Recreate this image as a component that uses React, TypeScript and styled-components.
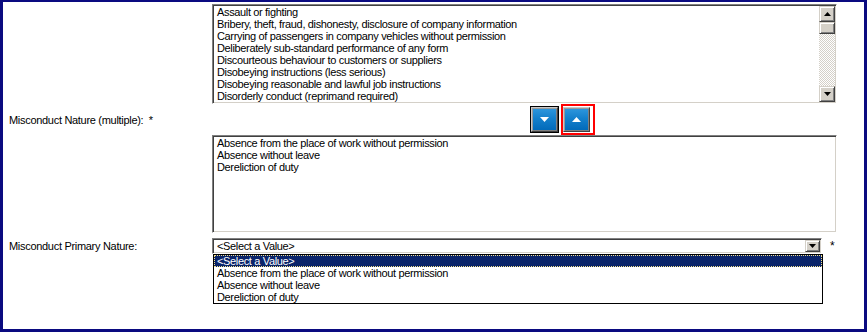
import React from "react";
import styled, { createGlobalStyle } from "styled-components";

const GlobalStyle = createGlobalStyle`
  html, body {
    margin: 0;
    padding: 0;
    background: #ffffff;
  }
  body {
    font-family: "Liberation Sans", Arial, sans-serif;
    font-size: 11px;
    color: #000000;
  }
`;

const Frame = styled.div`
  width: 867px;
  height: 332px;
  box-sizing: border-box;
  border-style: solid;
  border-color: #0a0a80;
  border-width: 2px 3px 3px 3px;
  padding-top: 2px;
  background: #ffffff;
  display: grid;
  grid-template-columns: 209px 1fr;
  grid-auto-rows: min-content;
  overflow: hidden;
`;

const Label = styled.div<{ $gap?: number }>`
  padding-left: 6px;
  margin-top: ${(p) => p.$gap ?? 0}px;
  display: flex;
  align-items: center;
  letter-spacing: -0.3px;
  white-space: pre;
`;

const Cell = styled.div<{ $gap?: number }>`
  display: flex;
  align-items: center;
  margin-top: ${(p) => p.$gap ?? 0}px;
`;

const ListBox = styled.div<{ $height: number }>`
  position: relative;
  width: 625px;
  height: ${(p) => p.$height}px;
  box-sizing: border-box;
  border: 1px solid;
  border-color: #808080 #ffffff #ffffff #808080;
  box-shadow: inset 1px 1px 0 #404040, inset -1px -1px 0 #d4d0c8;
  padding: 1px;
  display: flex;
  overflow: hidden;
`;

const Items = styled.ul`
  flex: 1;
  list-style: none;
  margin: 0;
  padding: 0;
`;

const Item = styled.li<{ $selected?: boolean }>`
  height: 12px;
  line-height: 12px;
  padding-left: 3px;
  letter-spacing: -0.35px;
  white-space: nowrap;
  background: ${(p) => (p.$selected ? "#0a246a" : "transparent")};
  color: ${(p) => (p.$selected ? "#ffffff" : "#000000")};
  outline: ${(p) => (p.$selected ? "1px dotted #f2e08a" : "none")};
  outline-offset: -1px;
`;

const ScrollBar = styled.div`
  width: 16px;
  display: flex;
  flex-direction: column;
  background-color: #f4f3ef;
  background-image: repeating-conic-gradient(#d4d0c8 0 25%, #ffffff 0 50%);
  background-size: 2px 2px;
`;

const ScrollButton = styled.div<{ $height?: number }>`
  width: 16px;
  height: ${(p) => p.$height ?? 16}px;
  box-sizing: border-box;
  background: #d4d0c8;
  border: 1px solid;
  border-color: #d4d0c8 #404040 #404040 #d4d0c8;
  box-shadow: inset 1px 1px 0 #ffffff, inset -1px -1px 0 #808080;
  display: flex;
  align-items: center;
  justify-content: center;
`;

const Track = styled.div`
  flex: 1;
`;

const MoveBar = styled.div`
  height: 31px;
  display: flex;
  align-items: center;
  gap: 2px;
  padding-left: 318px;
`;

const FocusRing = styled.div`
  border: 1px solid #000000;
  display: flex;
`;

const Highlight = styled.div`
  border: 2px solid #ff0000;
  padding: 1px 3px 1px 0;
  display: flex;
`;

const MoveButton = styled.button`
  width: 27px;
  height: 25px;
  padding: 0;
  margin: 0;
  box-sizing: border-box;
  border: 1px solid;
  border-color: #c8c8c8 #404040 #404040 #c8c8c8;
  box-shadow: inset 1px 1px 0 #9a9a9a, inset -1px -1px 0 #808080;
  background: linear-gradient(#2f98de 0%, #1480cc 45%, #0068b8 100%);
  display: flex;
  align-items: center;
  justify-content: center;
  cursor: pointer;
`;

const SelectRow = styled.div`
  display: flex;
  align-items: center;
  gap: 8px;
`;

const Select = styled.div`
  position: relative;
  width: 610px;
  height: 16px;
  box-sizing: border-box;
  border: 1px solid;
  border-color: #808080 #ffffff #ffffff #808080;
  box-shadow: inset 1px 1px 0 #404040, inset -1px -1px 0 #d4d0c8;
  padding: 1px;
  display: flex;
  align-items: stretch;
`;

const SelectValue = styled.div`
  flex: 1;
  padding-left: 3px;
  line-height: 12px;
  letter-spacing: -0.35px;
`;

const DropButton = styled(ScrollButton)`
  width: 15px;
  height: 12px;
`;

const DropList = styled.ul`
  position: absolute;
  top: 15px;
  left: 0;
  width: 610px;
  height: 50px;
  margin: 0;
  padding: 0;
  list-style: none;
  box-sizing: border-box;
  border: 1px solid #000000;
  background: #ffffff;
`;

const Asterisk = styled.span`
  font-size: 12px;
`;

const Arrow = ({ up, color, w, h }: { up?: boolean; color: string; w: number; h: number }) => (
  <svg width={w} height={h} viewBox={`0 0 ${w} ${h}`}>
    <polygon
      points={up ? `0,${h} ${w / 2},0 ${w},${h}` : `0,0 ${w},0 ${w / 2},${h}`}
      fill={color}
    />
  </svg>
);

const natures = [
  "Assault or fighting",
  "Bribery, theft, fraud, dishonesty, disclosure of company information",
  "Carrying of passengers in company vehicles without permission",
  "Deliberately sub-standard performance of any form",
  "Discourteous behaviour to customers or suppliers",
  "Disobeying instructions (less serious)",
  "Disobeying reasonable and lawful job instructions",
  "Disorderly conduct (reprimand required)",
];

const chosen = [
  "Absence from the place of work without permission",
  "Absence without leave",
  "Dereliction of duty",
];

export default function App() {
  return (
    <>
      <GlobalStyle />
      <Frame>
        <div />
        <Cell>
          <ListBox $height={100}>
            <Items>
              {natures.map((n) => (
                <Item key={n}>{n}</Item>
              ))}
            </Items>
            <ScrollBar>
              <ScrollButton>
                <Arrow up color="#000" w={7} h={4} />
              </ScrollButton>
              <ScrollButton $height={12} />
              <Track />
              <ScrollButton>
                <Arrow color="#000" w={7} h={4} />
              </ScrollButton>
            </ScrollBar>
          </ListBox>
        </Cell>

        <Label>Misconduct Nature (multiple):  *</Label>
        <MoveBar>
          <FocusRing>
            <MoveButton aria-label="Add">
              <Arrow color="#fff" w={9} h={5} />
            </MoveButton>
          </FocusRing>
          <Highlight>
            <MoveButton aria-label="Remove">
              <Arrow up color="#fff" w={9} h={5} />
            </MoveButton>
          </Highlight>
        </MoveBar>

        <div />
        <Cell>
          <ListBox $height={98}>
            <Items>
              {chosen.map((n) => (
                <Item key={n}>{n}</Item>
              ))}
            </Items>
          </ListBox>
        </Cell>

        <Label $gap={5}>Misconduct Primary Nature:</Label>
        <Cell $gap={5}>
          <SelectRow>
            <Select>
              <SelectValue>&lt;Select a Value&gt;</SelectValue>
              <DropButton>
                <Arrow color="#000" w={7} h={4} />
              </DropButton>
              <DropList>
                <Item $selected>&lt;Select a Value&gt;</Item>
                {chosen.map((n) => (
                  <Item key={n}>{n}</Item>
                ))}
              </DropList>
            </Select>
            <Asterisk>*</Asterisk>
          </SelectRow>
        </Cell>
      </Frame>
    </>
  );
}
